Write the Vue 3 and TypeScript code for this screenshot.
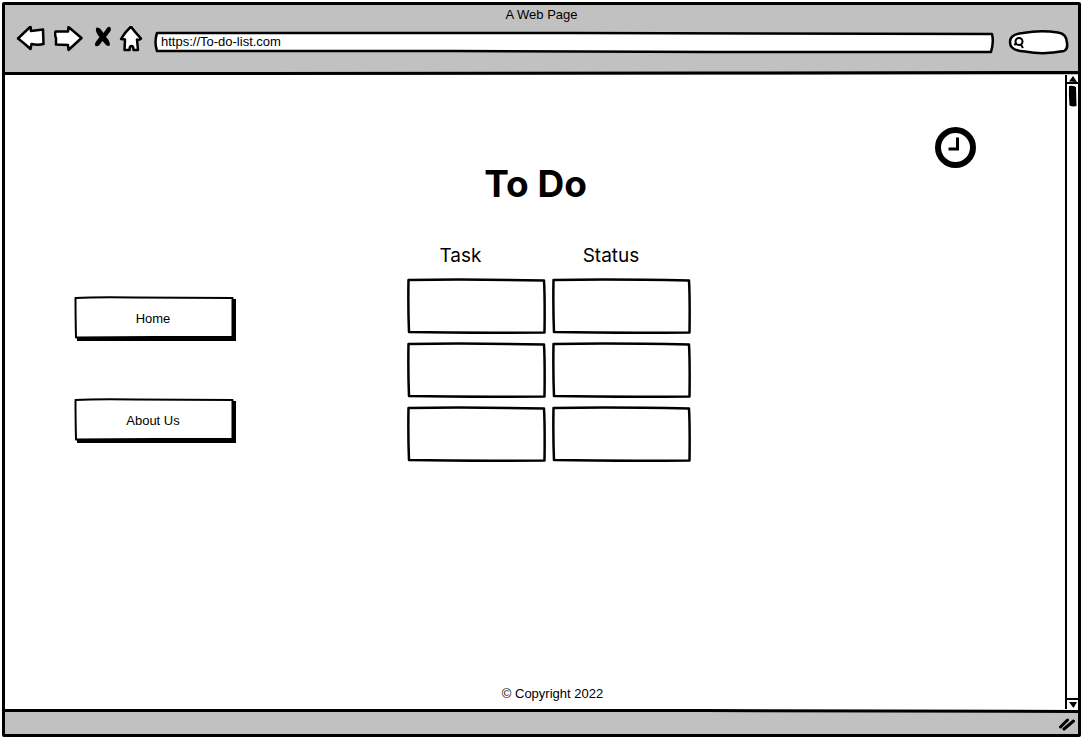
<script setup lang="ts">
import { ref } from 'vue'

interface Task {
  id: number
  name: string
  status: string
}

const address = ref('https://To-do-list.com')
const query = ref('')
const links: string[] = ['Home', 'About Us']
const tasks = ref<Task[]>([
  { id: 1, name: '', status: '' },
  { id: 2, name: '', status: '' },
  { id: 3, name: '', status: '' },
])
</script>

<template>
  <div class="browser">
    <header class="chrome">
      <div class="caption">A Web Page</div>
      <div class="toolbar">
        <button class="tool back" aria-label="Back">
          <svg width="30" height="32" viewBox="16 26 30 32">
            <path class="outline" d="M18 38.500 L30.500 26.500 L31 31 L43 29.500 L43.500 44 Q38 45.500 31.500 44 L30.500 49 Q24 43 18 38.500Z" />
          </svg>
        </button>
        <button class="tool forward" aria-label="Forward">
          <svg width="30" height="32" viewBox="54 26 30 32">
            <path class="outline" d="M81.500 38 L68.500 27 L68 31.500 L55.500 31.500 Q54.500 35 56 38 L56 44.500 L68 45 L68.500 50 Q75 44 81.500 38Z" />
          </svg>
        </button>
        <button class="tool stop" aria-label="Stop">
          <svg width="18" height="32" viewBox="94 26 18 32">
            <path d="M96 28 Q98 26.500 100.500 29 L103.500 33 L107 28 Q109 26 110.500 27.500 Q111.500 29 110.500 31 L106 37 Q109.500 40 110 45 Q108.500 47 106 45 L102.500 41 L99 45.500 Q96.500 47 95 45.500 Q94.500 43 96.500 41 L99.500 37 Q95 32 96 28Z" />
          </svg>
        </button>
        <button class="tool home" aria-label="Home page">
          <svg width="24" height="32" viewBox="119 26 24 32">
            <path class="outline" d="M131 26.500 Q134 31 141 38.500 Q139 40.500 137 39.500 L138 50 L133.500 50 Q133.500 46 131.500 46 Q129.500 46 129.500 50 L124.500 50 L125 39.500 L121 39 Q125 32 131 26.500Z" />
          </svg>
        </button>
        <label class="field url">
          <svg class="sketch" viewBox="0 0 840 24" preserveAspectRatio="none" aria-hidden="true">
            <path class="outline" d="M3 3 L420 3 L838 4 Q840 12 837 22 L560 22 L300 21 L3 21 Q0 12 3 3Z" />
          </svg>
          <input v-model="address" type="text" aria-label="Address" />
        </label>
        <label class="field search">
          <svg class="sketch" viewBox="0 0 62 26" preserveAspectRatio="none" aria-hidden="true">
            <path class="outline" d="M15 4 Q32 1 50 3.500 Q59 5 59 14 Q60 20 56 22 Q36 26 17 22.500 Q2 22 2 13 Q2 5 15 4Z" />
          </svg>
          <svg class="lens" width="12" height="12" viewBox="0 0 12 12" aria-hidden="true">
            <ellipse cx="6" cy="4.500" rx="3.500" ry="3.500" />
            <path d="M1 7.500 L4 7 M7.500 7 L10 11" />
          </svg>
          <input v-model="query" type="text" aria-label="Search" />
        </label>
      </div>
      <svg class="rule" viewBox="0 0 1076 4" preserveAspectRatio="none" aria-hidden="true">
        <path d="M0 2.500 L200 2.500 L700 2 L1076 1.500" />
      </svg>
    </header>

    <div class="viewport">
      <div class="page">
        <nav class="menu" aria-label="Main">
          <button v-for="link in links" :key="link" class="menu-button">
            <svg class="sketch" viewBox="0 0 162 46" preserveAspectRatio="none" aria-hidden="true">
              <path d="M3 3 H162 V45 H3Z" />
              <path class="face" d="M1.500 2 Q20 1 60 1.500 L158.500 2 L158.500 41 L80 41 L2 41.500 Q1.500 20 1.500 2Z" />
            </svg>
            <span>{{ link }}</span>
          </button>
        </nav>

        <main class="board">
          <h1>To Do</h1>
          <table>
            <thead>
              <tr>
                <th class="task" scope="col">Task</th>
                <th class="status" scope="col">Status</th>
              </tr>
            </thead>
            <tbody>
              <tr v-for="task in tasks" :key="task.id">
                <td v-for="(value, i) in [task.name, task.status]" :key="i">
                  <div class="cell">
                    <svg class="sketch" viewBox="0 0 139 56" preserveAspectRatio="none" aria-hidden="true">
                      <path class="box" d="M1.500 2 Q60 1 137 2.500 Q138 20 137.500 54.500 Q60 55 2 54 Q1 30 1.500 2Z" />
                    </svg>
                    <span>{{ value }}</span>
                  </div>
                </td>
              </tr>
            </tbody>
          </table>
        </main>

        <aside class="side">
          <svg width="42" height="42" viewBox="0 0 42 42" role="img" aria-label="Clock">
            <circle cx="20.500" cy="20.500" r="17.500" fill="none" stroke="#000" stroke-width="6" />
            <path d="M22.500 10.500 V22 H13.500" fill="none" stroke="#000" stroke-width="3" />
          </svg>
        </aside>

        <footer class="copyright">© Copyright 2022</footer>
      </div>

      <div class="scrollbar">
        <button class="arrow up" aria-label="Scroll up">
          <svg width="8" height="6" viewBox="0 0 8 6"><path d="M4 0 L8 6 L0 5.500Z" /></svg>
        </button>
        <div class="track">
          <svg width="11" height="22" viewBox="0 0 11 22" aria-hidden="true">
            <path d="M2 1 Q5 0 9 2 L9.500 21 Q6 22 2.500 20.500 Q1.500 10 2 1Z" />
          </svg>
        </div>
        <button class="arrow down" aria-label="Scroll down">
          <svg width="8" height="6" viewBox="0 0 8 6"><path d="M0 0 H8 L4.500 6Z" /></svg>
        </button>
      </div>
    </div>

    <div class="statusbar">
      <svg class="rule" viewBox="0 0 1076 4" preserveAspectRatio="none" aria-hidden="true">
        <path class="paper" d="M0 0 H1076 V3 L700 1.500 H0Z" />
        <path d="M0 1.500 L700 1.500 L1076 2.500" />
      </svg>
      <svg class="grip" width="18" height="14" viewBox="0 0 18 14" aria-hidden="true">
        <path d="M2.500 10 L9.500 3 M6 12 L15.500 4" />
      </svg>
    </div>
  </div>
</template>

<style scoped>
.browser {
  box-sizing: border-box;
  min-height: calc(100vh - 2px);
  margin: 2px 1px 0 2px;
  border: 3px solid #000;
  border-radius: 2px;
  display: flex;
  flex-direction: column;
  background: #fff;
  color: #000;
  font-family: "Liberation Sans", Arial, sans-serif;
  font-size: 13px;
}

button {
  padding: 0;
  border: 0;
  background: none;
  color: inherit;
  font: inherit;
  cursor: pointer;
}

svg {
  display: block;
}

input {
  position: relative;
  box-sizing: border-box;
  width: 100%;
  height: 100%;
  padding: 0;
  border: 0;
  outline: 0;
  background: transparent;
  color: inherit;
  font: inherit;
}

.outline,
.face,
.box {
  fill: #fff;
  stroke: #000;
  stroke-width: 2.5;
  stroke-linejoin: round;
}

.face {
  stroke-width: 2;
}

.sketch {
  position: absolute;
  inset: 0;
  width: 100%;
  height: 100%;
}

.chrome {
  background: #c1c1c1;
  display: flex;
  flex-direction: column;
}

.caption {
  height: 21px;
  line-height: 20px;
  text-align: center;
}

.toolbar {
  display: flex;
  align-items: center;
  height: 32px;
  margin-bottom: 13px;
  padding: 0 8px 0 11px;
}

.forward {
  margin-left: 8px;
}

.stop {
  margin-left: 10px;
}

.home {
  margin-left: 7px;
}

.field {
  position: relative;
  display: block;
}

.url {
  flex: 1;
  height: 24px;
  margin-left: 11px;
}

.url input {
  padding: 0 7px 2px;
}

.search {
  width: 62px;
  height: 26px;
  margin-left: 14px;
}

.search input {
  padding: 0 8px 0 20px;
}

.lens {
  position: absolute;
  left: 5px;
  top: 8px;
  fill: none;
  stroke: #000;
  stroke-width: 2;
}

.rule {
  width: 100%;
  height: 4px;
  fill: none;
  stroke: #000;
  stroke-width: 3;
}

.paper {
  fill: #fff;
  stroke: none;
}

.viewport {
  flex: 1;
  display: flex;
}

.page {
  flex: 1;
  display: grid;
  grid-template-columns: minmax(170px, 396fr) 302px minmax(50px, 362fr);
  grid-template-rows: 1fr auto;
}

.menu {
  display: flex;
  flex-direction: column;
  align-items: flex-start;
  gap: 56px;
  margin: 221px 0 0 69px;
}

.menu-button {
  position: relative;
  width: 162px;
  height: 46px;
  padding: 0 4px 2px 0;
}

.menu-button span {
  position: relative;
}

.board h1 {
  margin: 84px 33px 0 0;
  font-family: Inter, "Liberation Sans", sans-serif;
  font-size: 37px;
  line-height: 50px;
  font-weight: 700;
  text-align: center;
}

table {
  width: 296px;
  margin-top: 25px;
  border-spacing: 6px 8px;
  table-layout: fixed;
}

th {
  height: 28px;
  padding: 0;
  font-family: Inter, "Liberation Sans", sans-serif;
  font-size: 19px;
  line-height: 28px;
  font-weight: 400;
  text-align: center;
}

.task {
  padding-right: 32px;
}

.status {
  padding-right: 21px;
}

td {
  padding: 0;
}

.cell {
  position: relative;
  height: 56px;
}

.cell span {
  position: relative;
}

.side {
  display: flex;
  justify-content: flex-end;
  align-items: flex-start;
  padding: 52px 88px 0 0;
}

.copyright {
  grid-column: 1 / -1;
  padding: 0 0 5px 35px;
  line-height: 20px;
  text-align: center;
}

.scrollbar {
  display: flex;
  flex-direction: column;
  width: 11px;
  border-left: 2px solid #000;
}

.arrow {
  display: flex;
  align-items: center;
  justify-content: center;
  height: 9px;
}

.up {
  border-bottom: 2px solid #000;
}

.down {
  height: 11px;
  border-top: 2px solid #000;
}

.track {
  flex: 1;
  padding-top: 1px;
}

.statusbar {
  display: flex;
  flex-direction: column;
  height: 25px;
  background: #c1c1c1;
}

.grip {
  align-self: flex-end;
  margin: 4px 2px 0 0;
  fill: none;
  stroke: #000;
  stroke-width: 3;
  stroke-linecap: round;
}
</style>

<style>
body {
  background: #fff;
}
</style>
